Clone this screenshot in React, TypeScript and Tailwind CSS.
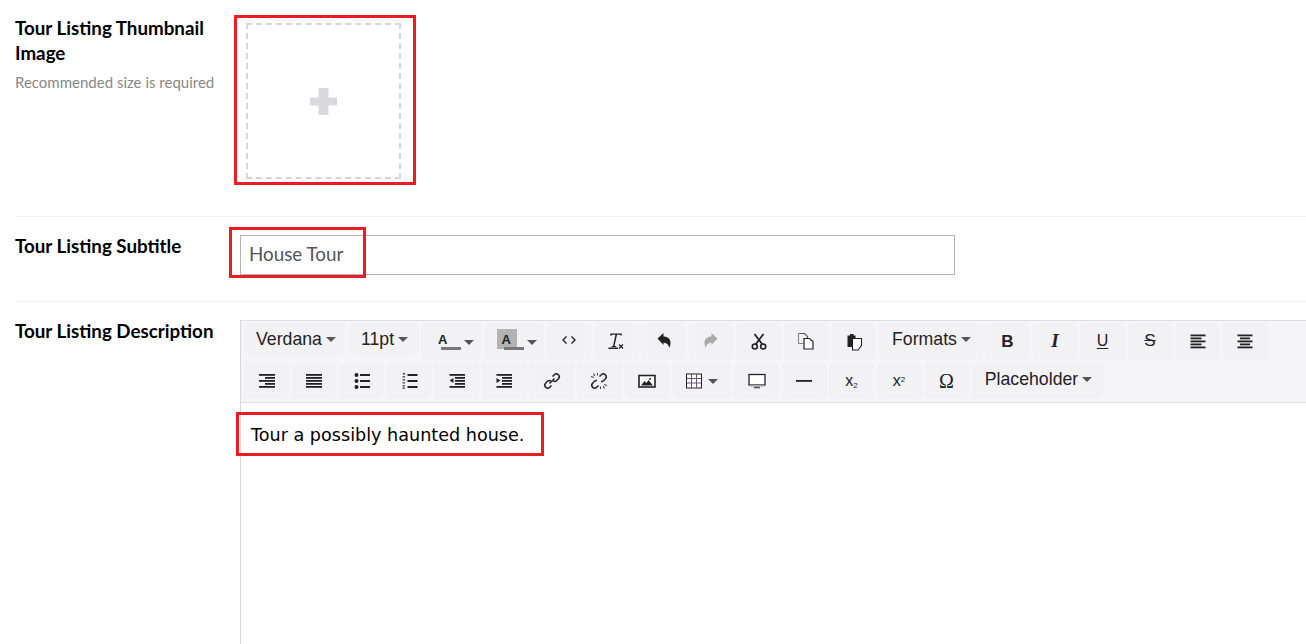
import React from "react";

const Caret = ({ className = "" }: { className?: string }) => (
  <span className={`inline-block w-0 h-0 border-x-[5px] border-x-transparent border-t-[5px] border-t-[#555] ${className}`} />
);

const Ic = ({ children, w = 20, h = 20 }: { children: React.ReactNode; w?: number; h?: number }) => (
  <svg width={w} height={h} viewBox={`0 0 ${w} ${h}`} className="block">
    {children}
  </svg>
);

const Lines = ({ rows, y = 2.5 }: { rows: [number, number][]; y?: number }) => (
  <Ic>
    {rows.map(([x, w], i) => (
      <rect key={i} x={x} y={y + i * 3} width={w} height={1.8} fill="#222" />
    ))}
  </Ic>
);

const TextBtn = ({ label, w, h = "h-[31px]", pt = "pt-0" }: { label: string; w: string; h?: string; pt?: string }) => (
  <div className={`${w} ${h} ${pt} rounded-[5px] bg-[#f2f2f4] flex items-start justify-center text-[17.7px] leading-[30px] text-[#222] font-['Liberation_Sans',Arial,sans-serif] shrink-0`}>
    <span className="ml-[2px]">{label}</span>
    <Caret className="ml-[4px] mt-[13px]" />
  </div>
);

const Btn = ({ children, w = "w-[45px]" }: { children: React.ReactNode; w?: string }) => (
  <div className={`${w} h-[36px] rounded-[5px] bg-[#f2f2f4] flex items-center justify-center shrink-0 text-[#222]`}>
    {children}
  </div>
);

export default function App() {
  return (
    <div className="h-[644px] w-[1306px] overflow-hidden bg-white font-['Lato',sans-serif] flex flex-col">
      {/* Thumbnail row */}
      <div className="ml-[15px] flex border-b border-[#f1f1f1] pt-[23px] pb-[37px]">
        <div className="w-[225px] -mt-[8px]">
          <div className="text-[18.75px] leading-[25px] font-bold text-black w-[200px]">Tour Listing Thumbnail Image</div>
          <div className="text-[15px] leading-[20px] text-[#888888] mt-[7px]">Recommended size is required</div>
        </div>
        <div className="relative ml-[6px] w-[155px] h-[156px] border-2 border-dashed border-[#d6d6d6] flex items-center justify-center">
          <svg width="27" height="27" viewBox="0 0 27 27" className="block">
            <rect x="8.500" y="0" width="10" height="27" fill="#dadade" />
            <rect x="0" y="9.500" width="27" height="8" fill="#dadade" />
          </svg>
          <div className="absolute -left-[14px] -top-[10px] w-[182px] h-[170px] border-[3px] border-[#ed1c24]" />
        </div>
      </div>

      {/* Subtitle row */}
      <div className="ml-[15px] flex border-b border-[#f1f1f1] pt-[18px] pb-[26px]">
        <div className="w-[225px] text-[18.75px] leading-[25px] font-bold text-black -mt-[2px]">Tour Listing Subtitle</div>
        <div className="relative w-[715px] h-[40px] border border-[#b3b3b3] flex items-center pl-[8px] pb-[2px] text-[18.8px] text-[#555555]">
          House Tour
          <div className="absolute -left-[12px] -top-[9px] w-[137px] h-[51px] border-[3px] border-[#ed1c24]" />
        </div>
      </div>

      {/* Description row */}
      <div className="ml-[15px] flex flex-1 pt-[18px]">
        <div className="w-[225px] text-[18.75px] leading-[25px] font-bold text-black -mt-[2px] shrink-0">Tour Listing Description</div>
        <div className="flex-1 border-l border-[#d9d9d9] flex flex-col">
          <div className="bg-[#f5f5f7] border-y border-[#dddddd] h-[83px] pl-[3px] pt-[3px] flex flex-col gap-[3px]">
            {/* first toolbar row */}
            <div className="flex gap-[2.5px] h-[36px]">
              <TextBtn label="Verdana" w="w-[102px]" />
              <TextBtn label="11pt" w="w-[70px]" />
              <Btn w="w-[60px]">
                <div className="relative w-[44px] h-[24px] flex items-center">
                  <span className="absolute left-[9px] top-[3px] text-[13px] leading-[14px] font-bold font-['Liberation_Sans',sans-serif]">A</span>
                  <span className="absolute left-[12px] top-[17px] w-[20px] h-[3px] bg-[#777]" />
                  <Caret className="absolute right-[-1px] top-[10px]" />
                </div>
              </Btn>
              <Btn w="w-[60px]">
                <div className="relative w-[44px] h-[24px] flex items-center">
                  <span className="absolute left-[5px] top-[-1px] w-[20px] h-[20px] bg-[#b3b3b3]" />
                  <span className="absolute left-[10px] top-[3px] text-[13px] leading-[14px] font-bold font-['Liberation_Sans',sans-serif]">A</span>
                  <span className="absolute left-[12px] top-[17px] w-[20px] h-[3px] bg-[#777]" />
                  <Caret className="absolute right-[-1px] top-[10px]" />
                </div>
              </Btn>
              <Btn>
                <Ic><path d="M7.500 6.500 4 10l3.500 3.500M12.500 6.500 16 10l-3.500 3.500" fill="none" stroke="#222" strokeWidth="1.400" transform="translate(0 -2)" /></Ic>
              </Btn>
              <Btn>
                <Ic>
                  <path d="M5.500 1.500H17l-.4 2H15.500L15.200 2.800H12L9.500 14h1.800l-.2 1H6.500l.2-1h1.300l2.500-11.200H7.200L6.500 3.500H5.100z" fill="#222" transform="translate(-1 0)" />
                  <rect x="2.500" y="15.500" width="9.500" height="1.500" fill="#222" />
                  <path d="m13 12.500 4 4m0-4-4 4" stroke="#222" strokeWidth="1.200" />
                </Ic>
              </Btn>
              <Btn>
                <Ic><path d="M3.500 6.500 9.500 1v3.500c4 0 7 2.200 7 6.200 0 2-.5 3.700-1.300 5.300-.4-3-2.500-5.200-5.700-5.200V13z" fill="#222" /></Ic>
              </Btn>
              <Btn>
                <Ic><path d="M16.500 6.500 10.500 1v3.500c-4 0-7 2.200-7 6.200 0 2 .5 3.700 1.300 5.300.4-3 2.500-5.200 5.700-5.200V13z" fill="#aaaaaa" /></Ic>
              </Btn>
              <Btn>
                <Ic>
                  <path d="M5.500 2l8 10.500M14.500 2l-8 10.500" stroke="#222" strokeWidth="1.800" />
                  <circle cx="5.800" cy="14.500" r="2.500" fill="none" stroke="#222" strokeWidth="1.600" />
                  <circle cx="14.200" cy="14.500" r="2.500" fill="none" stroke="#222" strokeWidth="1.600" />
                </Ic>
              </Btn>
              <Btn>
                <Ic>
                  <path d="M2.500 1.500h6l3 3v2" fill="none" stroke="#555" strokeWidth="1.100" />
                  <path d="M2.500 1.500v10h5" fill="none" stroke="#888" strokeWidth="1.100" />
                  <path d="M8 6.500h5.500l3.500 3v7.500H8z" fill="#fff" stroke="#222" strokeWidth="1.200" />
                </Ic>
              </Btn>
              <Btn>
                <Ic>
                  <path d="M3.500 3.500h2.500V2h3.500v1.500h2V6H8.500v9h-5z" fill="#222" />
                  <path d="M8.500 6.500h9v7l-3.500 4.500H8.500z" fill="#fff" stroke="#222" strokeWidth="1.100" />
                </Ic>
              </Btn>
              <TextBtn label="Formats" w="w-[104px]" h="h-[36px]" />
              <Btn><span className="text-[17px] font-bold font-['Liberation_Sans',sans-serif] -mt-[1px]">B</span></Btn>
              <Btn><span className="text-[19px] font-bold italic font-['Liberation_Serif',serif] -mt-[1px]">I</span></Btn>
              <Btn><span className="text-[16px] underline underline-offset-[2px] font-['Liberation_Sans',sans-serif] -mt-[2px]">U</span></Btn>
              <Btn><span className="text-[17px] line-through font-['Liberation_Sans',sans-serif] -mt-[2px]">S</span></Btn>
              <Btn><Lines rows={[[2.5, 15], [2.5, 11], [2.5, 15], [2.5, 11], [2.5, 15]]} /></Btn>
              <Btn><Lines rows={[[2.5, 15], [5, 10], [2.5, 15], [5, 10], [2.5, 15]]} /></Btn>
            </div>
            {/* second toolbar row */}
            <div className="flex gap-[2.5px] h-[36px]">
              <Btn><Lines y={3} rows={[[2, 16], [8, 10], [2, 16], [8, 10], [2, 16]]} /></Btn>
              <Btn><Lines y={3} rows={[[2, 16], [2, 16], [2, 16], [2, 16], [2, 16]]} /></Btn>
              <Btn>
                <Ic>
                  <circle cx="4.500" cy="4" r="2" fill="#222" /><circle cx="4.500" cy="10" r="2" fill="#222" /><circle cx="4.500" cy="16" r="2" fill="#222" />
                  <rect x="8" y="3" width="10" height="2" fill="#222" /><rect x="8" y="9" width="10" height="2" fill="#222" /><rect x="8" y="15" width="10" height="2" fill="#222" />
                </Ic>
              </Btn>
              <Btn>
                <Ic>
                  <rect x="4" y="2" width="2" height="1.600" fill="#444" /><rect x="3.500" y="5" width="2.500" height="1.600" fill="#666" /><rect x="3.500" y="8" width="2.500" height="1.600" fill="#666" /><rect x="3.500" y="11" width="2.500" height="1.600" fill="#666" /><rect x="3.500" y="14" width="2.500" height="1.600" fill="#666" /><rect x="3.500" y="16.500" width="2.500" height="1.300" fill="#444" />
                  <rect x="8.500" y="3" width="10" height="2" fill="#222" /><rect x="8.500" y="9" width="10" height="2" fill="#222" /><rect x="8.500" y="15" width="10" height="2" fill="#222" />
                </Ic>
              </Btn>
              <Btn>
                <Ic>
                  <rect x="2.500" y="3" width="15.500" height="1.800" fill="#222" /><rect x="8" y="6" width="10" height="1.800" fill="#222" /><rect x="8" y="9" width="10" height="1.800" fill="#222" /><rect x="8" y="12" width="10" height="1.800" fill="#222" /><rect x="2.500" y="15" width="15.500" height="1.800" fill="#222" />
                  <path d="M6.500 7v5l-4-2.500z" fill="#222" />
                </Ic>
              </Btn>
              <Btn>
                <Ic>
                  <rect x="2.500" y="3" width="15.500" height="1.800" fill="#222" /><rect x="8" y="6" width="10" height="1.800" fill="#222" /><rect x="8" y="9" width="10" height="1.800" fill="#222" /><rect x="8" y="12" width="10" height="1.800" fill="#222" /><rect x="2.500" y="15" width="15.500" height="1.800" fill="#222" />
                  <path d="M2.500 7v5l4-2.500z" fill="#222" />
                </Ic>
              </Btn>
              <Btn>
                <Ic>
                  <path d="M7.500 12.500l5-5M10.500 5.500l1.800-1.800a2.900 2.900 0 0 1 4.100 4.100L14.500 9.700a2.900 2.900 0 0 1-3.300.5M9.500 14.500l-1.800 1.800a2.900 2.900 0 0 1-4.100-4.100l1.900-1.900a2.900 2.900 0 0 1 3.300-.5" fill="none" stroke="#222" strokeWidth="1.500" />
                </Ic>
              </Btn>
              <Btn>
                <Ic>
                  <path d="M10.500 5.500l1.800-1.800a2.900 2.900 0 0 1 4.100 4.100L14.500 9.700a2.900 2.900 0 0 1-2.500.7M9.500 14.500l-1.800 1.800a2.900 2.900 0 0 1-4.100-4.100l1.900-1.900a2.900 2.900 0 0 1 2.500-.7" fill="none" stroke="#222" strokeWidth="1.500" />
                  <path d="M4.500 2.500l1.200 2.500M2 5.500l2.800 .9M15.500 17.500l-1.200-2.500M18 14.500l-2.800-.9M8.500 2v2.500M11.500 15.500V18" stroke="#444" strokeWidth="1.100" />
                </Ic>
              </Btn>
              <Btn>
                <Ic>
                  <rect x="2" y="4.500" width="16" height="11.500" fill="#fff" stroke="#222" strokeWidth="1.600" />
                  <path d="M4 14.500l3.500-4.500 2 2 2-3 4.500 5.500z" fill="#222" />
                  <circle cx="13" cy="8" r="1" fill="#222" />
                </Ic>
              </Btn>
              <Btn w="w-[60px]">
                <div className="flex items-center gap-[6px]">
                  <Ic w={16} h={16}>
                    <rect x="0.500" y="1" width="15" height="14" fill="#fff" stroke="#222" strokeWidth="1" />
                    <path d="M1 5.500h14M1 10h14M5.500 1v14M10.500 1v14" stroke="#665577" strokeWidth="1" />
                  </Ic>
                  <Caret />
                </div>
              </Btn>
              <Btn>
                <Ic>
                  <rect x="2" y="3.500" width="16" height="10.500" fill="#fff" stroke="#223" strokeWidth="1.300" />
                  <rect x="7" y="15.500" width="6" height="1.800" fill="#555" />
                  <rect x="2.500" y="14" width="15" height="1.600" fill="#aaa" />
                </Ic>
              </Btn>
              <Btn><Ic><rect x="2" y="9" width="16" height="1.800" fill="#222" /></Ic></Btn>
              <Btn>
                <span className="text-[16px] font-['Liberation_Sans',sans-serif] leading-none">x<sub className="text-[8px]">2</sub></span>
              </Btn>
              <Btn>
                <span className="text-[16px] font-['Liberation_Sans',sans-serif] leading-none">x<sup className="text-[8px]">2</sup></span>
              </Btn>
              <Btn><span className="text-[20px] font-['Liberation_Serif',serif]">Ω</span></Btn>
              <TextBtn label="Placeholder" w="w-[132px]" h="h-[36px]" pt="pt-[1px]" />
            </div>
          </div>
          <div className="flex-1 bg-white pl-[10px] pt-[20px] font-['DejaVu_Sans',Verdana,sans-serif] text-[17.6px] leading-[24px] text-black">
            <div className="relative w-fit">
              Tour a possibly haunted house.
              <div className="absolute -left-[15px] -top-[11px] w-[308px] h-[44px] border-[3px] border-[#ed1c24]" />
            </div>
          </div>
        </div>
      </div>
    </div>
  );
}
